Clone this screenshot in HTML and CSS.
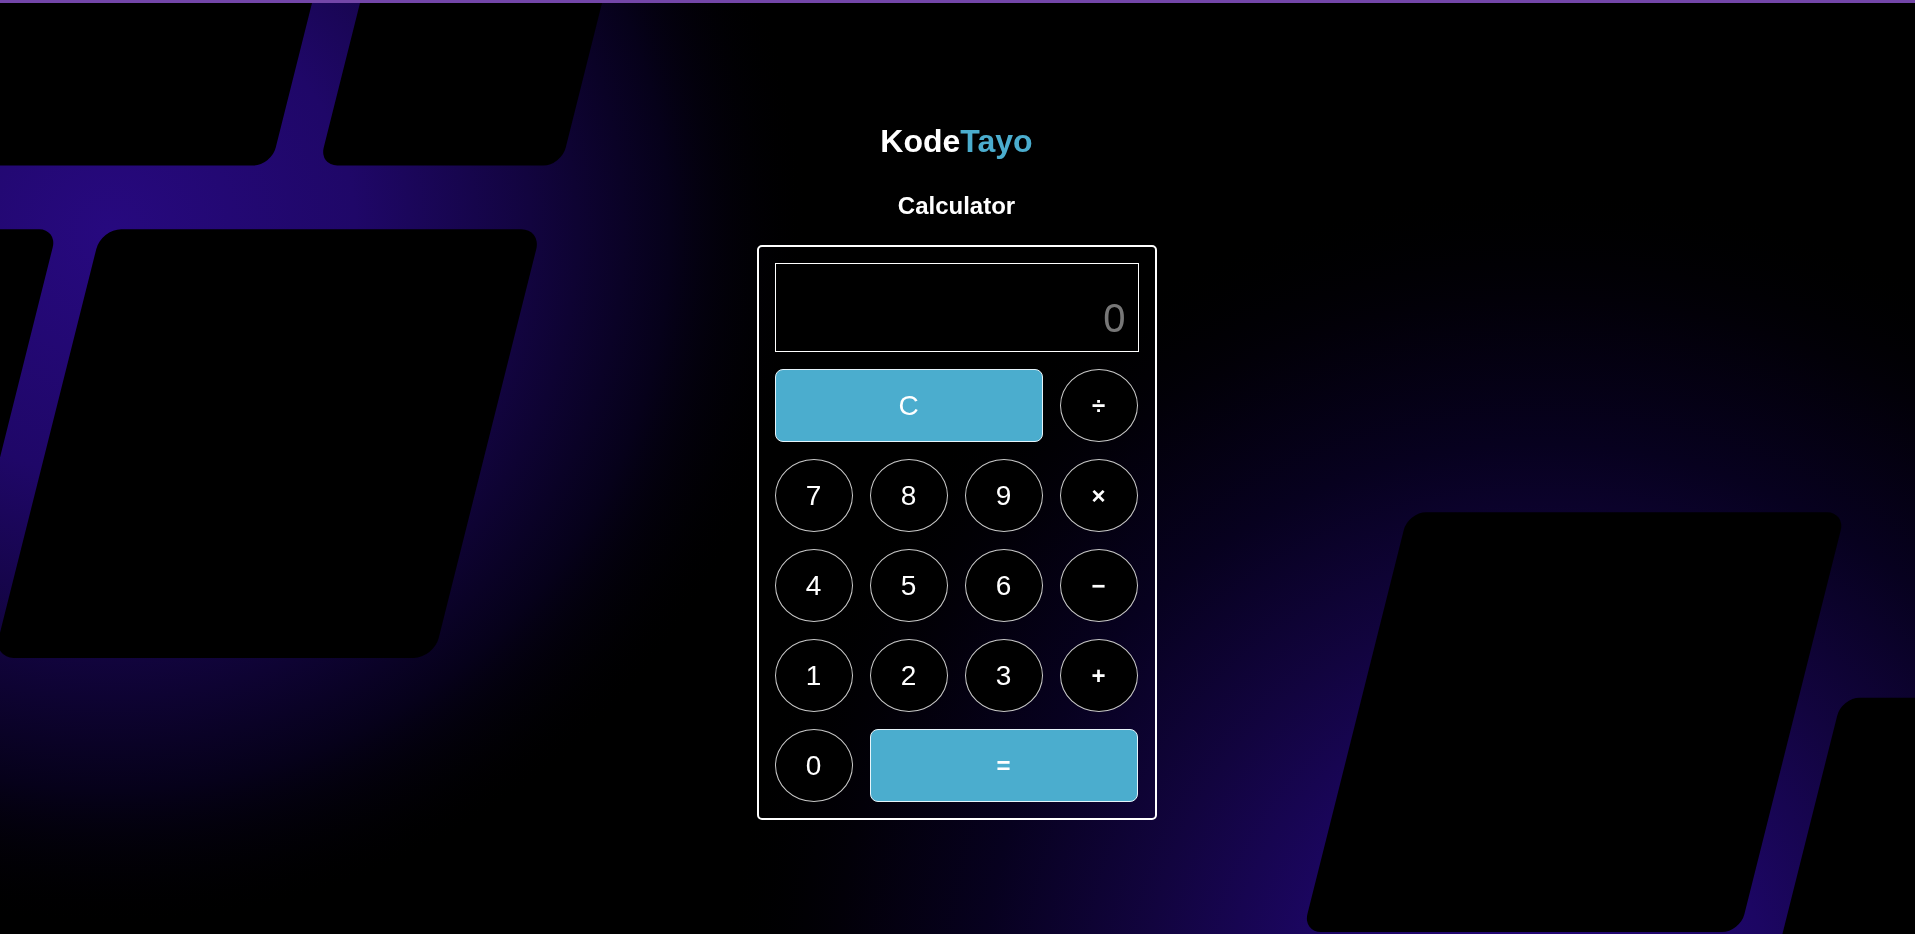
FILE: index.html
```html
<!DOCTYPE html>
<html lang="en">
<head>
<meta charset="utf-8">
<title>KodeTayo Calculator</title>
<link rel="stylesheet" href="styles.css">
</head>
<body>
<div class="backdrop" aria-hidden="true">
  <svg class="backdrop-art" viewBox="0 0 1915 934" preserveAspectRatio="none">
    <defs>
      <radialGradient id="glowA" gradientUnits="userSpaceOnUse" cx="110" cy="230" r="700">
        <stop offset="0" stop-color="#27097f"/>
        <stop offset="0.35" stop-color="#1f0768"/>
        <stop offset="0.6" stop-color="#12043f"/>
        <stop offset="0.8" stop-color="#06011a"/>
        <stop offset="1" stop-color="#000000" stop-opacity="0"/>
      </radialGradient>
      <radialGradient id="glowB" gradientUnits="userSpaceOnUse" cx="1540" cy="1000" r="820">
        <stop offset="0" stop-color="#26087c"/>
        <stop offset="0.28" stop-color="#1c0663"/>
        <stop offset="0.48" stop-color="#12043f"/>
        <stop offset="0.68" stop-color="#07011f"/>
        <stop offset="0.86" stop-color="#020008"/>
        <stop offset="1" stop-color="#000000" stop-opacity="0"/>
      </radialGradient>
    </defs>
    <rect x="0" y="0" width="1915" height="934" fill="#000"/>
    <rect x="0" y="0" width="1915" height="934" fill="url(#glowA)"/>
    <rect x="0" y="0" width="1915" height="934" fill="url(#glowB)"/>
    <g transform="skewX(-14.04)" fill="#000">
      <rect x="-400" y="-300" width="712" height="463" rx="18"/>
      <rect x="360" y="-300" width="242" height="463" rx="18"/>
      <rect x="-400" y="227" width="514" height="430" rx="18"/>
      <rect x="158" y="227" width="440" height="430" rx="20"/>
      <rect x="1536" y="511" width="437" height="421" rx="18"/>
      <rect x="2016" y="697" width="500" height="500" rx="18"/>
    </g>
  </svg>
</div>

<main class="page">
  <h1 class="brand"><span class="brand-kode">Kode</span><span class="brand-tayo">Tayo</span></h1>
  <h2 class="subtitle">Calculator</h2>

  <section class="calculator">
    <div class="display">0</div>
    <div class="keys">
      <button class="key key-wide">C</button>
      <button class="key key-round key-op">÷</button>

      <button class="key key-round">7</button>
      <button class="key key-round">8</button>
      <button class="key key-round">9</button>
      <button class="key key-round key-op">×</button>

      <button class="key key-round">4</button>
      <button class="key key-round">5</button>
      <button class="key key-round">6</button>
      <button class="key key-round key-op">−</button>

      <button class="key key-round">1</button>
      <button class="key key-round">2</button>
      <button class="key key-round">3</button>
      <button class="key key-round key-op">+</button>

      <button class="key key-round">0</button>
      <button class="key key-wide key-op">=</button>
    </div>
  </section>
</main>
</body>
</html>
```

FILE: styles.css
```css
html, body {
  margin: 0;
  padding: 0;
  height: 100%;
}

body {
  background: #000;
  color: #fff;
  font-family: "Liberation Sans", Arial, sans-serif;
  overflow: hidden;
}

.backdrop {
  position: fixed;
  inset: 0;
  z-index: 0;
  border-top: 3px solid #7346a8;
  box-shadow: inset -1px 0 0 #8a8a8a;
}

.backdrop-art {
  display: block;
  width: 100%;
  height: 100%;
}

.page {
  position: relative;
  z-index: 1;
  display: flex;
  flex-direction: column;
  align-items: center;
  padding: 123px 2px 0 0;
}

.brand {
  margin: 0;
  font-size: 32px;
  line-height: 37px;
  font-weight: 700;
}

.brand-kode {
  color: #ffffff;
}

.brand-tayo {
  color: #4badce;
}

.subtitle {
  margin: 32px 0 25px;
  font-size: 24px;
  line-height: 28px;
  font-weight: 700;
  color: #fff;
}

.calculator {
  width: 364px;
  padding: 16px;
  border: 2px solid #fff;
  border-radius: 5px;
  display: flex;
  flex-direction: column;
  gap: 17px;
}

.display {
  box-sizing: border-box;
  height: 89px;
  border: 1px solid #fff;
  background: #000;
  color: #777;
  font-size: 40px;
  line-height: 46px;
  display: flex;
  align-items: flex-end;
  justify-content: flex-end;
  padding: 0 12px 10px;
}

.keys {
  display: grid;
  grid-template-columns: repeat(4, 78px);
  grid-auto-rows: 73px;
  gap: 17px;
}

.key {
  font-family: "Liberation Sans", Arial, sans-serif;
  font-size: 28px;
  color: #fff;
  padding: 0;
  margin: 0;
  cursor: pointer;
  display: flex;
  align-items: center;
  justify-content: center;
}

.key-op {
  font-size: 24px;
  font-weight: 700;
}

.key-round {
  background: #000;
  border: 1px solid #c8c8c8;
  border-radius: 50%;
}

.key-wide {
  grid-column: span 3;
  background: #4badce;
  border: 1px solid #e6f4fa;
  border-radius: 8px;
}
```
